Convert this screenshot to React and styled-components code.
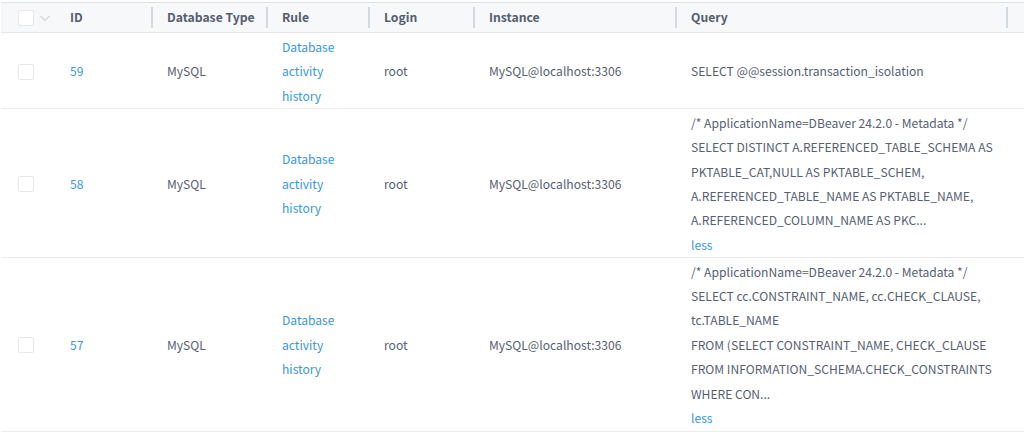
import React from "react";
import styled, { createGlobalStyle } from "styled-components";

const Global = createGlobalStyle`
  html, body { margin: 0; padding: 0; background: #fff; }
  body { font-family: "Noto Sans CJK SC", "Noto Sans", sans-serif; font-size: 12.1px; color: #566071; overflow: hidden; }
`;
const COLS = "54px 97px 115px 102px 105px 202px 1fr";
const Table = styled.div`
  width: 1024px;
  height: 432px;
  padding-top: 2px;
  padding-left: 1px;
  box-sizing: border-box;
  overflow: hidden;
`;
const HeaderRow = styled.div`
  display: grid;
  grid-template-columns: ${COLS};
  height: 29px;
  background: #f7f8fa;
  border-top: 1px solid #dfe3e9;
  border-bottom: 1px solid #e4e7ec;
  align-items: center;
`;
const HeaderCell = styled.div`
  position: relative;
  height: 100%;
  box-sizing: border-box;
  padding-bottom: 2px;
  display: flex;
  align-items: center;
  padding-left: 15px;
  font-size: 12.2px;
  font-weight: 700;
  color: #535d6d;
  &::after {
    content: "";
    position: absolute;
    right: ${(p) => (p.$end ? "16px" : "-1px")};
    top: 4px;
    bottom: 4px;
    width: 2px;
    background: #d3d9e1;
  }
`;
const SelectCell = styled.div`
  display: flex;
  align-items: center;
  gap: 5px;
  padding-left: 17px;
`;
const Check = styled.span`
  width: 14px;
  height: 14px;
  background: #fff;
  border: 1px solid #e6e8ec;
  border-radius: 2px;
  flex: none;
`;
const Chevron = styled.svg`
  width: 12px;
  height: 12px;
  flex: none;
`;
const Row = styled.div`
  display: grid;
  grid-template-columns: ${COLS};
  border-bottom: 1px solid #e9ecef;
  padding-top: ${(p) => p.$top}px;
  align-items: center;
  line-height: 24.4px;
`;
const Cell = styled.div`
  padding-left: 15px;
`;
const LinkText = styled.div`
  color: #3a97dc;
`;
const rows = [
  { id: 59, top: 2, q: ["SELECT @@session.transaction_isolation"] },
  {
    id: 58,
    top: 1.5,
    q: [
      "/* ApplicationName=DBeaver 24.2.0 - Metadata */",
      "SELECT DISTINCT A.REFERENCED_TABLE_SCHEMA AS",
      "PKTABLE_CAT,NULL AS PKTABLE_SCHEM,",
      "A.REFERENCED_TABLE_NAME AS PKTABLE_NAME,",
      "A.REFERENCED_COLUMN_NAME AS PKC...",
    ],
    less: true,
  },
  {
    id: 57,
    top: 1.5,
    q: [
      "/* ApplicationName=DBeaver 24.2.0 - Metadata */",
      "SELECT cc.CONSTRAINT_NAME, cc.CHECK_CLAUSE,",
      "tc.TABLE_NAME",
      "FROM (SELECT CONSTRAINT_NAME, CHECK_CLAUSE",
      "FROM INFORMATION_SCHEMA.CHECK_CONSTRAINTS",
      "WHERE CON...",
    ],
    less: true,
  },
];
const headers = ["ID", "Database Type", "Rule", "Login", "Instance"];
export default function App() {
  return (
    <Table>
      <Global />
      <HeaderRow>
        <SelectCell>
          <Check />
          <Chevron viewBox="0 0 12 12" fill="none" stroke="#b9bfc9" strokeWidth="1">
            <path d="M1.5 4l4.5 4.5L10.5 4" />
          </Chevron>
        </SelectCell>
        {headers.map((h) => (
          <HeaderCell key={h}>{h}</HeaderCell>
        ))}
        <HeaderCell $end>Query</HeaderCell>
      </HeaderRow>
      {rows.map((r) => (
        <Row key={r.id} $top={r.top}>
          <SelectCell><Check /></SelectCell>
          <Cell><LinkText>{r.id}</LinkText></Cell>
          <Cell>MySQL</Cell>
          <Cell>
            <LinkText>Database</LinkText>
            <LinkText>activity</LinkText>
            <LinkText>history</LinkText>
          </Cell>
          <Cell>root</Cell>
          <Cell>MySQL@localhost:3306</Cell>
          <Cell>
            {r.q.map((l) => <div key={l}>{l}</div>)}
            {r.less && <LinkText>less</LinkText>}
          </Cell>
        </Row>
      ))}
    </Table>
  );
}
